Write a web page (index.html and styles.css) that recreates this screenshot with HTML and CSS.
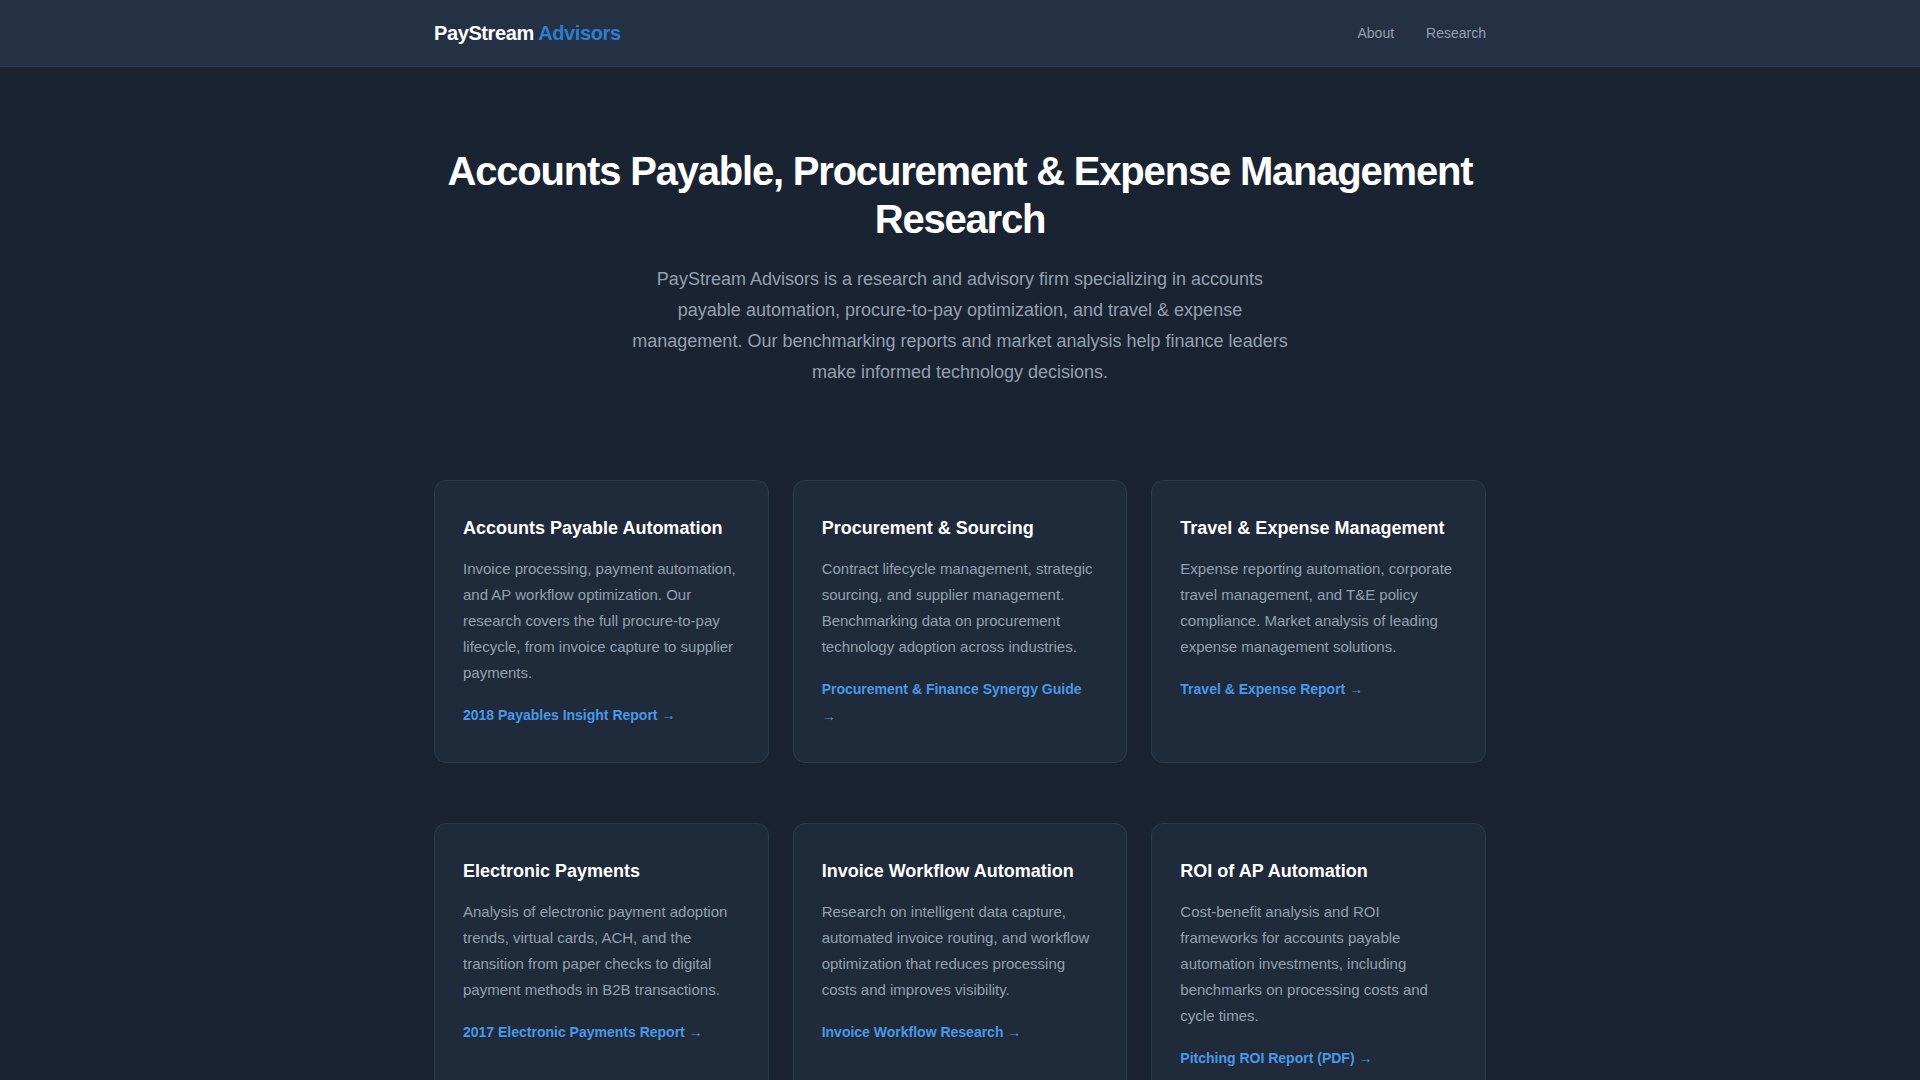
FILE: index.html
```html
<!DOCTYPE html>
<html lang="en">
<head>
<meta charset="utf-8">
<meta name="viewport" content="width=device-width, initial-scale=1">
<title>PayStream Advisors</title>
<link rel="stylesheet" href="styles.css">
</head>
<body>
<header class="site-header">
  <div class="container header-inner">
    <a class="logo" href="#">PayStream <span class="logo-accent">Advisors</span></a>
    <nav class="site-nav">
      <a href="#about">About</a>
      <a href="#research">Research</a>
    </nav>
  </div>
</header>
<main class="container">
  <section class="hero" id="about">
    <h1>Accounts Payable, Procurement &amp; Expense Management Research</h1>
    <p>PayStream Advisors is a research and advisory firm specializing in accounts payable automation, procure-to-pay optimization, and travel &amp; expense management. Our benchmarking reports and market analysis help finance leaders make informed technology decisions.</p>
  </section>
  <section class="cards" id="research">
    <article class="card">
      <h2>Accounts Payable Automation</h2>
      <p>Invoice processing, payment automation, and AP workflow optimization. Our research covers the full procure-to-pay lifecycle, from invoice capture to supplier payments.</p>
      <a href="#payables">2018 Payables Insight Report →</a>
    </article>
    <article class="card">
      <h2>Procurement &amp; Sourcing</h2>
      <p>Contract lifecycle management, strategic sourcing, and supplier management. Benchmarking data on procurement technology adoption across industries.</p>
      <a href="#procurement">Procurement &amp; Finance Synergy Guide →</a>
    </article>
    <article class="card">
      <h2>Travel &amp; Expense Management</h2>
      <p>Expense reporting automation, corporate travel management, and T&amp;E policy compliance. Market analysis of leading expense management solutions.</p>
      <a href="#travel">Travel &amp; Expense Report →</a>
    </article>
  </section>
  <section class="cards">
    <article class="card">
      <h2>Electronic Payments</h2>
      <p>Analysis of electronic payment adoption trends, virtual cards, ACH, and the transition from paper checks to digital payment methods in B2B transactions.</p>
      <a href="#payments">2017 Electronic Payments Report →</a>
    </article>
    <article class="card">
      <h2>Invoice Workflow Automation</h2>
      <p>Research on intelligent data capture, automated invoice routing, and workflow optimization that reduces processing costs and improves visibility.</p>
      <a href="#workflow">Invoice Workflow Research →</a>
    </article>
    <article class="card">
      <h2>ROI of AP Automation</h2>
      <p>Cost-benefit analysis and ROI frameworks for accounts payable automation investments, including benchmarks on processing costs and cycle times.</p>
      <a href="#roi">Pitching ROI Report (PDF) →</a>
    </article>
  </section>
</main>
</body>
</html>
```
FILE: styles.css
```css
* {
  box-sizing: border-box;
  margin: 0;
  padding: 0;
}

body {
  background: #1a2332;
  color: #94a0b0;
  font-family: "Liberation Sans", Arial, sans-serif;
  font-size: 16px;
  line-height: 27px;
}

a {
  text-decoration: none;
}

.container {
  max-width: 1100px;
  margin: 0 auto;
  padding: 0 24px;
}

.site-header {
  background: #243044;
  border-bottom: 1px solid #2a3b50;
  padding: 16px 0;
}

.header-inner {
  display: flex;
  align-items: center;
  justify-content: space-between;
}

.logo {
  color: #fff;
  font-size: 20px;
  font-weight: 700;
  line-height: 34px;
  letter-spacing: -0.02em;
}

.logo-accent {
  color: #2d7dd2;
}

.site-nav {
  display: flex;
  gap: 32px;
  font-size: 14px;
}

.site-nav a {
  color: #94a0b0;
}

.hero {
  padding: 80px 0 92px;
  text-align: center;
}

.hero h1 {
  margin-bottom: 21px;
  color: #fff;
  font-size: 40px;
  line-height: 48px;
  letter-spacing: -0.03em;
}

.hero p {
  max-width: 664px;
  margin: 0 auto;
  font-size: 18px;
  line-height: 31px;
}

.cards {
  display: grid;
  grid-template-columns: repeat(3, 1fr);
  gap: 24px;
  padding: 0 0 60px;
}

.card {
  display: flex;
  flex-direction: column;
  align-items: flex-start;
  padding: 32px 28px;
  background: #1f2a3a;
  border: 1px solid #2a3b50;
  border-radius: 12px;
}

.card h2 {
  margin-bottom: 12px;
  color: #fff;
  font-size: 18px;
  line-height: 31px;
}

.card p {
  margin-bottom: 16px;
  font-size: 15px;
  line-height: 26px;
}

.card a {
  color: #4a98e8;
  font-size: 14px;
  font-weight: 700;
}

@media (max-width: 900px) {
  .cards {
    grid-template-columns: 1fr;
  }
}
```
